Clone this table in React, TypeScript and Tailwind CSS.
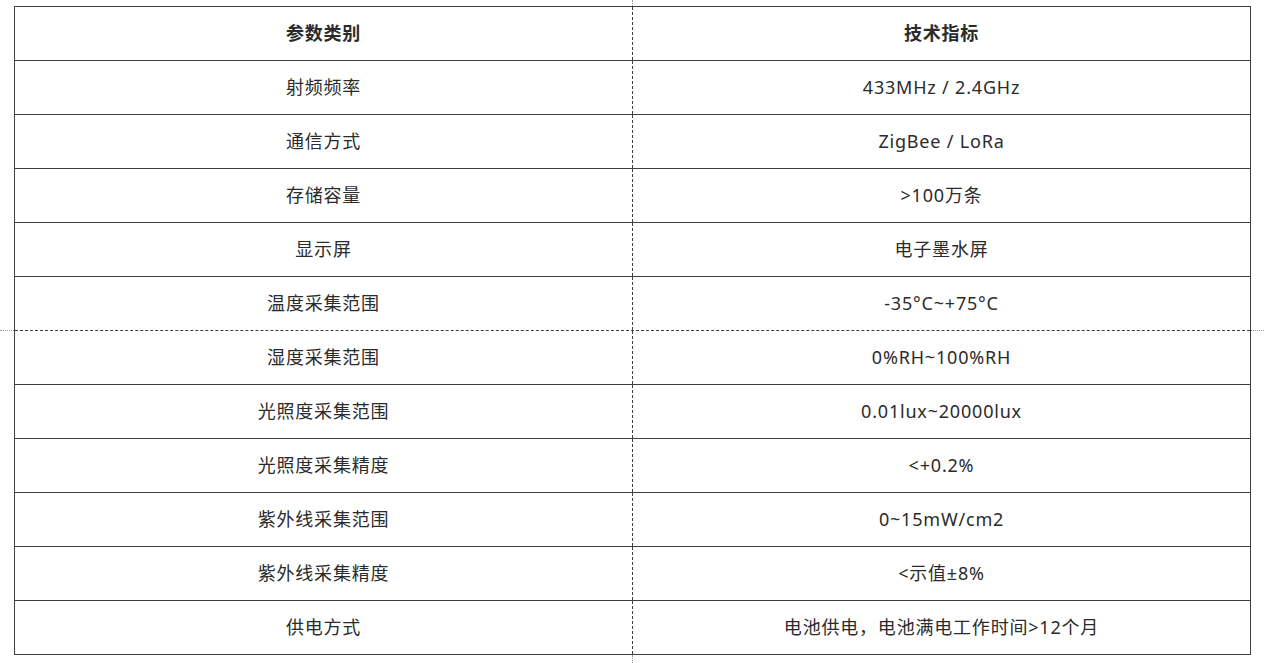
import React from "react";

const rows: [string, string][] = [
  ["射频频率", "433MHz / 2.4GHz"],
  ["通信方式", "ZigBee / LoRa"],
  ["存储容量", ">100万条"],
  ["显示屏", "电子墨水屏"],
  ["温度采集范围", "-35°C~+75°C"],
  ["湿度采集范围", "0%RH~100%RH"],
  ["光照度采集范围", "0.01lux~20000lux"],
  ["光照度采集精度", "<+0.2%"],
  ["紫外线采集范围", "0~15mW/cm2"],
  ["紫外线采集精度", "<示值±8%"],
  ["供电方式", "电池供电，电池满电工作时间>12个月"],
];

export default function App() {
  return (
    <div
      className="relative w-[1264px] h-[663px] bg-white pt-[6px] pl-[14px] text-[#2b2b2b]"
      style={{ fontFamily: '"Noto Sans", "Noto Sans CJK SC", sans-serif' }}
    >
      {/* guide lines outside the table */}
      <div className="absolute left-[632px] top-0 h-[6px] border-l border-dotted border-[#9a9a9a]" />
      <div className="absolute left-[632px] top-[655px] h-[8px] border-l border-dotted border-[#9a9a9a]" />
      <div className="absolute left-0 top-[330px] w-[14px] border-t border-dotted border-[#9a9a9a]" />
      <div className="absolute left-[1251px] top-[330px] w-[13px] border-t border-dotted border-[#9a9a9a]" />

      <div className="w-[1237px] border border-[#3f3f3f] text-[18px] tracking-[0.8px]">
        <div className="flex h-[54px] border-b border-[#3f3f3f] font-bold">
          <div className="w-[617px] flex items-center justify-center">参数类别</div>
          <div className="w-[618px] flex items-center justify-center border-l border-dashed border-[#3f3f3f]">技术指标</div>
        </div>
        {rows.map(([a, b], i) => (
          <div
            key={a}
            className={
              i === rows.length - 1
                ? "flex h-[53px]"
                : i === 4
                ? "flex h-[54px] border-b border-dashed border-[#3f3f3f]"
                : "flex h-[54px] border-b border-[#3f3f3f]"
            }
          >
            <div className="w-[617px] flex items-center justify-center">{a}</div>
            <div className="w-[618px] flex items-center justify-center border-l border-dashed border-[#3f3f3f]">{b}</div>
          </div>
        ))}
      </div>
    </div>
  );
}
